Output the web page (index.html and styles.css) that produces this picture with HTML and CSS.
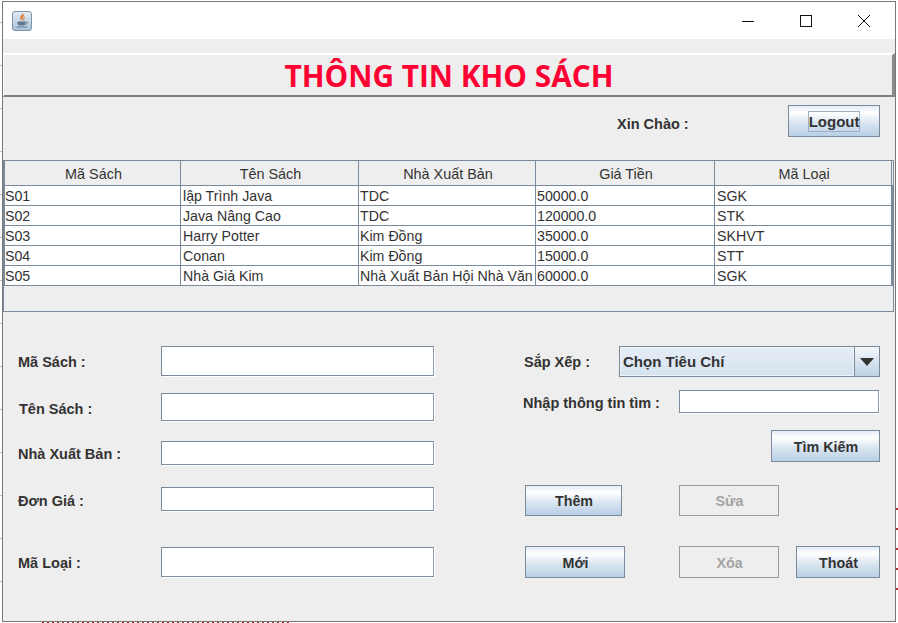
FILE: index.html
```html
<!DOCTYPE html>
<html lang="vi">
<head>
  <meta charset="UTF-8">
  <title>Thông Tin Kho Sách</title>
  <link rel="stylesheet" href="styles.css">
</head>
<body>

  <div class="window">
    <div class="titlebar">
      <svg class="app-icon" width="20" height="20" viewBox="0 0 20 20">
        <defs>
          <linearGradient id="tile" x1="0" y1="0" x2="0" y2="1">
            <stop offset="0" stop-color="#e4edf6"/>
            <stop offset="1" stop-color="#a9c0d8"/>
          </linearGradient>
        </defs>
        <rect x="0.5" y="0.5" width="19" height="19" rx="2.5" fill="url(#tile)" stroke="#7f93a8"/>
        <path d="M11 2.5 C13.5 5 9 6.5 10.5 10 C7 8.5 8 5 11 2.5 Z" fill="#e07b2a"/>
        <path d="M12.5 5.5 C13.5 7.5 11.5 8 12 10 C10.5 9 11 6.5 12.5 5.5 Z" fill="#e07b2a"/>
        <path d="M5.5 10.5 H13.5 V12.5 C13.5 14 12 14.5 9.5 14.5 C7 14.5 5.5 14 5.5 12.5 Z" fill="#5f7891"/>
        <path d="M13.5 11 H15 C16 11 16 13 13.5 13.3" fill="none" stroke="#5f7891"/>
        <path d="M4.5 16 H15" stroke="#5f7891"/>
      </svg>
      <div class="win-controls">
        <svg width="14" height="14" viewBox="0 0 14 14"><path d="M1 7.5 H13" stroke="#111"/></svg>
        <svg width="14" height="14" viewBox="0 0 14 14"><rect x="1.5" y="1.5" width="11" height="11" fill="none" stroke="#111"/></svg>
        <svg width="14" height="14" viewBox="0 0 14 14"><path d="M1 1 L13 13 M13 1 L1 13" stroke="#111"/></svg>
      </div>
    </div>

    <div class="content">
      <div class="title-panel">
        <h1>THÔNG TIN KHO SÁCH</h1>
      </div>

      <div class="greeting">
        <span class="label">Xin Chào :</span>
        <button class="btn btn-logout"><span class="focus">Logout</span></button>
      </div>

      <div class="table-wrap">
        <table>
          <thead>
            <tr>
              <th>Mã Sách</th>
              <th>Tên Sách</th>
              <th>Nhà Xuất Bản</th>
              <th>Giá Tiền</th>
              <th>Mã Loại</th>
            </tr>
          </thead>
          <tbody>
            <tr><td>S01</td><td>lập Trình Java</td><td>TDC</td><td>50000.0</td><td>SGK</td></tr>
            <tr><td>S02</td><td>Java Nâng Cao</td><td>TDC</td><td>120000.0</td><td>STK</td></tr>
            <tr><td>S03</td><td>Harry Potter</td><td>Kim Đồng</td><td>35000.0</td><td>SKHVT</td></tr>
            <tr><td>S04</td><td>Conan</td><td>Kim Đồng</td><td>15000.0</td><td>STT</td></tr>
            <tr><td>S05</td><td>Nhà Giả Kim</td><td>Nhà Xuất Bản Hội Nhà Văn</td><td>60000.0</td><td>SGK</td></tr>
          </tbody>
        </table>
      </div>

      <div class="form-area">
        <div class="col-left">
          <div class="field f1"><label class="label">Mã Sách :</label><input type="text"></div>
          <div class="field f2"><label class="label shift">Tên Sách :</label><input type="text"></div>
          <div class="field f3"><label class="label">Nhà Xuất Bản :</label><input type="text"></div>
          <div class="field f4"><label class="label">Đơn Giá :</label><input type="text"></div>
          <div class="field f5"><label class="label">Mã Loại :</label><input type="text"></div>
        </div>

        <div class="col-right">
          <div class="sort-row">
            <label class="label sort-label">Sắp Xếp :</label>
            <div class="combo">
              <span class="combo-text">Chọn Tiêu Chí</span>
              <span class="combo-arrow"></span>
            </div>
          </div>
          <div class="search-row">
            <label class="label search-label">Nhập thông tin tìm :</label>
            <input type="text">
          </div>
          <div class="find-row">
            <button class="btn btn-find">Tìm Kiếm</button>
          </div>
          <div class="action-row first">
            <button class="btn btn-add">Thêm</button>
            <button class="btn btn-off">Sửa</button>
          </div>
          <div class="action-row second">
            <button class="btn btn-new">Mới</button>
            <button class="btn btn-off">Xóa</button>
            <button class="btn btn-exit">Thoát</button>
          </div>
        </div>
      </div>
    </div>
  </div>

</body>
</html>
```

FILE: styles.css
```css
* {
  box-sizing: border-box;
}

html, body {
  margin: 0;
  height: 100%;
  overflow: hidden;
}

/* bits of the windows behind show round the edge */
body {
  background:
    repeating-linear-gradient(90deg, #7a3030 0 2px, transparent 2px 5px) 42px 100% / 250px 1px no-repeat,
    repeating-linear-gradient(#a33 0 2px, transparent 2px 20px) 100% 508px / 2px 92px no-repeat,
    repeating-linear-gradient(#bbb 0 1px, transparent 1px 43px) 0 22px / 2px 600px no-repeat,
    #fff;
  font-family: "Liberation Sans", Arial, sans-serif;
  color: #333;
  padding: 1px 2px 0 2px;
}

.window {
  width: 894px;
  height: 621px;
  border: 1px solid #777;
  background: #eee;
  display: flex;
  flex-direction: column;
}

.titlebar {
  height: 37px;
  background: #fff;
  display: flex;
  justify-content: space-between;
  align-items: center;
  padding: 0 24px 0 9px;
  flex-shrink: 0;
}

.app-icon {
  display: block;
}

.win-controls {
  display: flex;
  gap: 44px;
}

.win-controls svg {
  display: block;
}

.content {
  flex: 1;
  display: flex;
  flex-direction: column;
  min-height: 0;
}

.title-panel {
  margin-top: 14px;
  height: 44px;
  border-top: 2px solid #fff;
  border-left: 1px solid #fff;
  border-right: 3px solid #8a8a8a;
  border-bottom: 2px solid #808080;
  padding: 2px 0 0 2px;
  display: flex;
  align-items: center;
  justify-content: center;
}

h1 {
  margin: 0;
  font-family: "Open Sans", sans-serif;
  font-size: 29.8px;
  font-weight: 700;
  color: #ff0033;
  line-height: 1;
}

.label {
  font-size: 14.5px;
  font-weight: bold;
  color: #333;
  white-space: nowrap;
}

.greeting {
  height: 63px;
  display: flex;
  align-items: flex-start;
  padding-top: 8px;
}

.greeting .label {
  margin-left: 614px;
  margin-top: 11px;
}

.btn {
  font-family: "Liberation Sans", Arial, sans-serif;
  font-size: 14.3px;
  font-weight: bold;
  color: #333;
  border: 1px solid #7a8a99;
  background: linear-gradient(#e3ecf5 0%, #fff 22%, #dbe6f1 55%, #b8cfe5 100%);
  padding: 2px 0 0 1px;
  display: flex;
  align-items: center;
  justify-content: center;
}

.btn-logout {
  width: 92px;
  height: 32px;
  margin-left: 99px;
  padding: 0;
  font-size: 15px;
}

.focus {
  border: 1px solid #9fb0c4;
  width: 52px;
  height: 21px;
  line-height: 19px;
  display: block;
}

.table-wrap {
  height: 152px;
  width: 891px;
  border: 1px solid #7a8a99;
  background: linear-gradient(#7a8a99, #7a8a99) 100% 24px / 2px 101px no-repeat;
}

table {
  border-collapse: collapse;
  table-layout: fixed;
  width: 887px;
  font-size: 14.2px;
}

th, td {
  border: 1px solid #7a8a99;
  padding: 1px 0 0 1px;
  overflow: hidden;
  white-space: nowrap;
}

th {
  height: 24px;
  font-size: 14.4px;
  font-weight: normal;
  text-align: center;
  background: #eee;
  border-top: 0;
  padding: 3px 0 0 2px;
}

td {
  height: 20px;
  line-height: 18px;
  background: #fff;
}

td:first-child {
  padding-left: 0;
}

td:nth-child(2), td:nth-child(5) {
  padding-left: 2px;
}

th:nth-child(1) { width: 176px; }
th:nth-child(2) { width: 178px; }
th:nth-child(3) { width: 177px; }
th:nth-child(4) { width: 179px; }
th:nth-child(5) { width: 177px; }

.form-area {
  display: flex;
  padding-top: 34px;
}

input {
  display: block;
  background: #fff;
  border: 1px solid #7a8a99;
  border-right-color: #8d9aa8;
  box-shadow: 1px 1px 0 #fff;
  padding: 0;
}

.col-left {
  width: 520px;
  padding-left: 15px;
  flex-shrink: 0;
}

.field {
  display: flex;
  align-items: center;
}

.field .label {
  width: 143px;
  flex-shrink: 0;
  padding-top: 2px;
}

.field input {
  width: 273px;
  height: 100%;
}

.field .shift {
  padding-left: 1px;
}

.f1 { height: 30px; }
.f2 { height: 28px; margin-top: 17px; }
.f3 { height: 24px; margin-top: 20px; }
.f4 { height: 24px; margin-top: 22px; }
.f5 { height: 30px; margin-top: 36px; }

.f2 .label, .f4 .label {
  padding-top: 4px;
}

.col-right {
  flex: 1;
}

.sort-row {
  display: flex;
  align-items: center;
  height: 31px;
}

.sort-label {
  width: 95px;
  margin-left: 1px;
}

.combo {
  width: 261px;
  height: 31px;
  border: 1px solid #7a8a99;
  background: linear-gradient(#e6eef6, #d5e2ef);
  display: flex;
}

.combo-text {
  flex: 1;
  font-size: 15px;
  font-weight: bold;
  line-height: 30px;
  padding-left: 3px;
  border-right: 1px solid #7a8a99;
  box-shadow: inset 0 0 0 1px #eef3f8;
}

.combo-arrow {
  width: 24px;
  position: relative;
  background: linear-gradient(#f4f8fb, #bdd2e6);
}

.combo-arrow::after {
  content: "";
  position: absolute;
  left: 5px;
  top: 11px;
  border-left: 7px solid transparent;
  border-right: 7px solid transparent;
  border-top: 8px solid #333;
}

.search-row {
  display: flex;
  align-items: center;
  height: 23px;
  margin-top: 13px;
}

.search-label {
  width: 156px;
  padding-top: 3px;
}

.search-row input {
  width: 200px;
  height: 23px;
}

.find-row {
  margin-top: 17px;
  display: flex;
  justify-content: flex-end;
  width: 357px;
}

.btn-find {
  width: 109px;
  height: 32px;
}

.action-row {
  display: flex;
}

.action-row.first {
  margin-top: 23px;
  margin-left: 2px;
}

.action-row.second {
  margin-top: 30px;
  margin-left: 2px;
}

.action-row .btn {
  height: 32px;
}

.action-row.first .btn {
  height: 31px;
  padding-top: 0;
}

.btn-add {
  width: 97px;
  margin-right: 57px;
}

.btn-new {
  width: 100px;
  margin-right: 54px;
}

.btn.btn-off {
  width: 100px;
  color: #a3a3a3;
  background: #eee;
  border-color: #999;
}

.btn-exit {
  width: 84px;
  margin-left: 17px;
}
```
